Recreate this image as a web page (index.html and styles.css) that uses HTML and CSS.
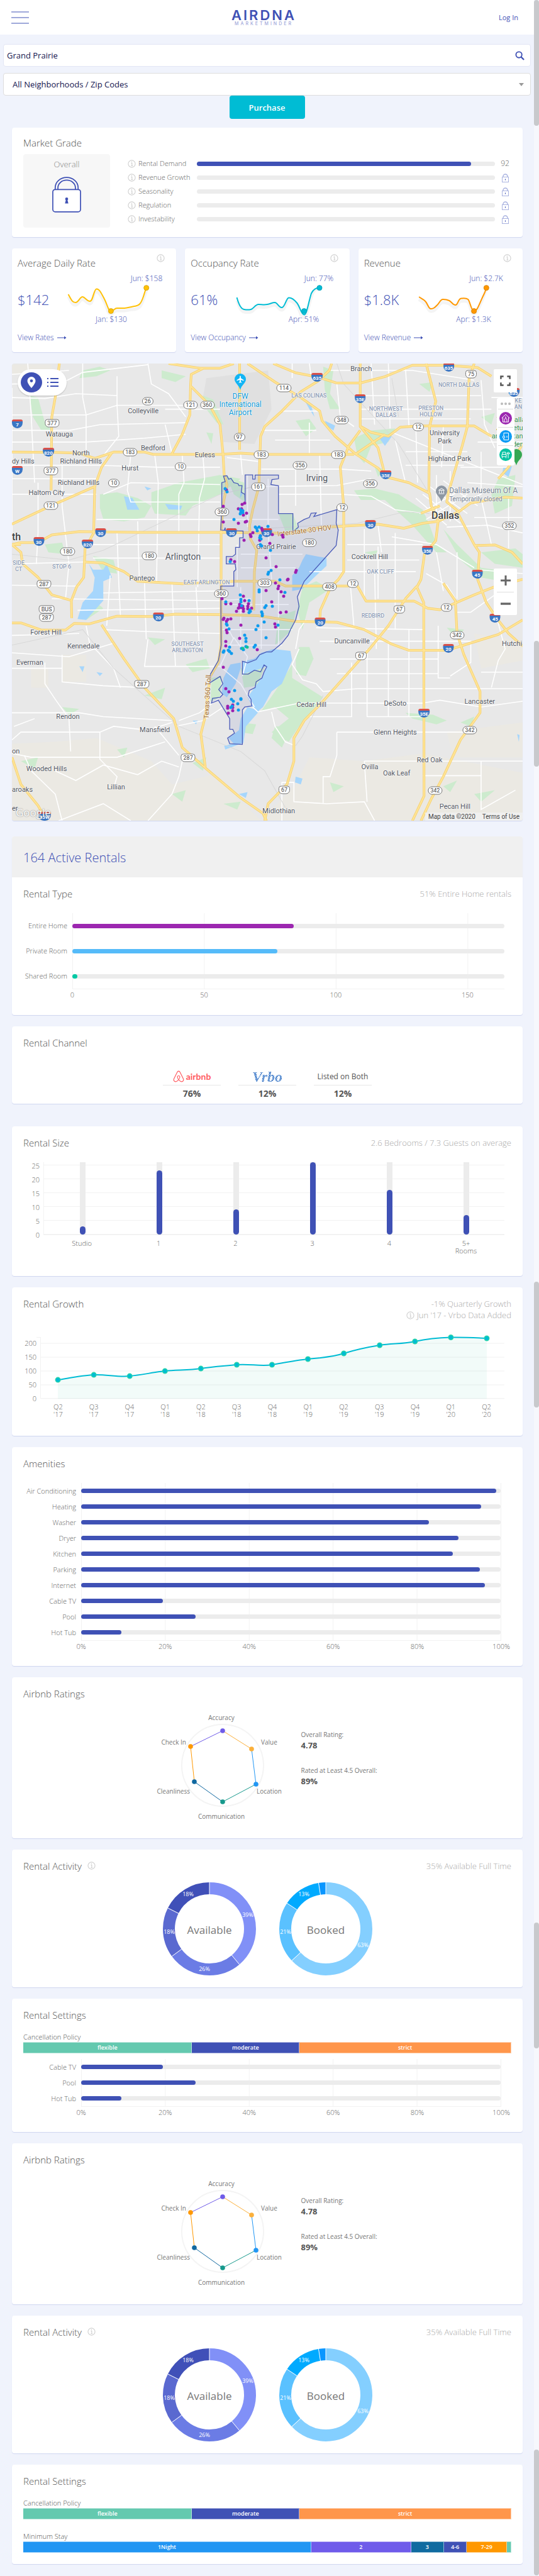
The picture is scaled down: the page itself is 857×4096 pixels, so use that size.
FILE: index.html
```html
<!DOCTYPE html>
<html lang="en">
<head>
<meta charset="utf-8">
<meta name="viewport" content="width=device-width, initial-scale=1">
<title>Grand Prairie - MarketMinder</title>
<link rel="stylesheet" href="styles.css">
</head>
<body>
<svg class="defs" aria-hidden="true">
  <symbol id="info" viewBox="0 0 14 14"><circle cx="7" cy="7" r="6" fill="none" stroke="#cfcfcf" stroke-width="1.2"/><path d="M6 6h1.400v4.200M5.800 10.300h3" fill="none" stroke="#cfcfcf" stroke-width="1.200"/><circle cx="6.900" cy="3.800" r=".9" fill="#cfcfcf"/></symbol>
  <symbol id="lock" viewBox="0 0 48 60"><path d="M5 22V19a19 17 0 0 1 38 0v3M9.500 22v-3a14.500 12.500 0 0 1 29 0v3" fill="none" stroke="currentColor" stroke-width="1.800"/><rect x="1" y="22" width="46" height="37" rx="4" fill="#fff" stroke="currentColor" stroke-width="1.800"/><circle cx="24" cy="37.500" r="2.400" fill="currentColor"/><path d="M23 38h2l1.800 7h-5.600z" fill="currentColor"/></symbol>
  <symbol id="lock-mini" viewBox="0 0 11 14"><path d="M2 6V4.500a3.500 3.500 0 0 1 7 0V6" fill="none" stroke="#aab3e0" stroke-width="1.400"/><rect x=".5" y="5.500" width="10" height="8" fill="#fff" stroke="#aab3e0"/><path d="M5.500 8.500v2" stroke="#3f51b5" stroke-width="1.200"/></symbol>
  <symbol id="arrow" viewBox="0 0 15 8"><path d="M0 4h12" stroke="#3f51b5" stroke-width="1.200"/><path d="M11 1.500l3.500 2.500-3.500 2.500z" fill="#3f51b5"/></symbol>
</svg>
<div class="shell">
<div class="page">
  <header class="topbar">
    <button class="menu" aria-label="Menu"><span></span><span></span><span></span></button>
    <a class="logo" href="#"><span class="logo-name">AIRDNA</span><span class="logo-sub">MARKETMINDER</span></a>
    <a class="login" href="#">Log In</a>
  </header>

  <form class="filters">
    <div class="search">
      <input type="text" value="Grand Prairie" aria-label="Market">
      <button type="button" class="search-btn" aria-label="Search"><svg viewBox="0 0 16 16"><circle cx="6.500" cy="6.500" r="5" fill="none" stroke="#3f51b5" stroke-width="2"/><path d="M10 10l5 5" stroke="#3f51b5" stroke-width="2.400"/></svg></button>
    </div>
    <div class="area">
      <select aria-label="Neighborhood or zip code"><option>All Neighborhoods / Zip Codes</option></select>
      <svg class="caret" viewBox="0 0 8 5"><path d="M0 0h8L4 5z" fill="#999"/></svg>
    </div>
    <button type="button" class="purchase">Purchase</button>
  </form>

  <main>
    <section class="card grade">
      <h2>Market Grade</h2>
      <div class="grade-body">
        <div class="overall"><span>Overall</span><svg class="lock-big"><use href="#lock"/></svg></div>
        <ul class="scores">
          <li><svg class="info"><use href="#info"/></svg><span class="name">Rental Demand</span><span class="track"><i style="width:92%"></i></span><span class="val">92</span></li>
          <li><svg class="info"><use href="#info"/></svg><span class="name">Revenue Growth</span><span class="track"></span><span class="val"><svg class="lock-small"><use href="#lock-mini"/></svg></span></li>
          <li><svg class="info"><use href="#info"/></svg><span class="name">Seasonality</span><span class="track"></span><span class="val"><svg class="lock-small"><use href="#lock-mini"/></svg></span></li>
          <li><svg class="info"><use href="#info"/></svg><span class="name">Regulation</span><span class="track"></span><span class="val"><svg class="lock-small"><use href="#lock-mini"/></svg></span></li>
          <li><svg class="info"><use href="#info"/></svg><span class="name">Investability</span><span class="track"></span><span class="val"><svg class="lock-small"><use href="#lock-mini"/></svg></span></li>
        </ul>
      </div>
    </section>

    <div class="rates">
      <section class="card rate">
        <header><h2>Average Daily Rate</h2><svg class="info"><use href="#info"/></svg></header>
        <div class="rate-body"><strong>$142</strong>
          <svg class="spark" viewBox="0 0 180 84">
            <path class="shade" d="M9 38C13 46 15 51 20 51S27 42 31 42s7 7 12 7 5-19 10-19 8 7 13 16 5 19 10 19 5-5 10-5 8 0 12 0 8-2 13-2 8-1 11-4 4-6 6-12 3-10 5-14"/>
            <path stroke="#ffc107" d="M8.600 34C13 42 15 47 20 47S27 38 31 38s7 7 12 7 6-19 10.400-19.500S61 32 66 41.500 72 60.600 76.400 60.600 82 56 86 56s8 0 12 0 8-1.500 13-2.500 8-1 11-4 4-6 6-12 3-10 4.700-14.400"/>
            <circle cx="76.400" cy="60.600" r="4" fill="#ffc107" stroke="#dba80e"/><circle cx="132.700" cy="23.700" r="4" fill="#ffc107" stroke="#dba80e"/>
            <text x="133" y="13">Jun: $158</text><text x="77" y="78">Jan: $130</text>
          </svg></div>
        <a href="#">View Rates <svg class="arrow"><use href="#arrow"/></svg></a>
      </section>
      <section class="card rate">
        <header><h2>Occupancy Rate</h2><svg class="info"><use href="#info"/></svg></header>
        <div class="rate-body"><strong>61%</strong>
          <svg class="spark" viewBox="0 0 180 84">
            <path class="shade" d="M1 44C4 53 7 61 12 62s7 1 11 0 7-8 12-8 9 1 14 0 8-3 12-3 6 8 11 8 7-15 11-15 8 2 13 8 6 19 11 19 7-17 12-33 8-10 13-14"/>
            <path stroke="#00bcd4" d="M.6 39C3 48 7 57 12 58s7 1 11 0 7-8 12-8 9 1 14 0 8-3 12-3 6 8 11 8 7-15 11-15.500 8 2 13 8 7 19 11.500 19S114 48 119 32.500c3-6 8-9 13-9"/>
            <circle cx="107.500" cy="60.600" r="4" fill="#00bcd4" stroke="#08a5bb"/><circle cx="132" cy="23.700" r="4" fill="#00bcd4" stroke="#08a5bb"/>
            <text x="131" y="13">Jun: 77%</text><text x="107" y="78">Apr: 51%</text>
          </svg></div>
        <a href="#">View Occupancy <svg class="arrow"><use href="#arrow"/></svg></a>
      </section>
      <section class="card rate">
        <header><h2>Revenue</h2><svg class="info"><use href="#info"/></svg></header>
        <div class="rate-body"><strong>$1.8K</strong>
          <svg class="spark" viewBox="0 0 180 84">
            <path class="shade" d="M15 42c4 3 6 4 10 8s5 11 9 11 6-1 10-6 5-8 9-8 6 0 10 2 6 6 10 6 4-10 9-10 8-1 11 1 5 19 9 19 6-4 12-18 5-11 8-22"/>
            <path stroke="#ff9800" d="M15.200 38c4 3 6 3 10 7s5 12 9 12 6-2 10-6 5-9 9-9 6 0 10 2 6 7 10 7 4-10 9-10.500 8-1 11 1.500 5 18.600 9.400 18.600 6-5 12-18.500 5-9 7.700-18.400"/>
            <circle cx="102.600" cy="60.600" r="4" fill="#ff9800" stroke="#dd8504"/><circle cx="122.300" cy="23.700" r="4" fill="#ff9800" stroke="#dd8504"/>
            <text x="122" y="13">Jun: $2.7K</text><text x="102" y="78">Apr: $1.3K</text>
          </svg></div>
        <a href="#">View Revenue <svg class="arrow"><use href="#arrow"/></svg></a>
      </section>
    </div>

    <section class="map" aria-label="Map of active rentals">
      <svg class="map-base" viewBox="34 24 1487 2364" preserveAspectRatio="none"></svg>
      <div class="map-pins"></div>
      <div class="view-toggle">
        <button class="on" aria-label="Map view"><svg viewBox="0 0 16 20"><path fill="#fff" fill-rule="evenodd" d="M8 1a6.500 6.500 0 0 0-6.500 6.500C1.500 12 8 19 8 19s6.500-7 6.500-11.500A6.500 6.500 0 0 0 8 1zm0 4.200a2.400 2.400 0 1 1 0 4.800 2.400 2.400 0 0 1 0-4.800z"/></svg></button>
        <button aria-label="List view"><svg viewBox="0 0 18 16"><path d="M5 2h13M5 8h13M5 14h13M0 2h2M0 8h2M0 14h2" stroke="#3f51b5" stroke-width="1.800"/></svg></button>
      </div>
      <div class="map-side">
        <button class="full" aria-label="Full screen"><svg viewBox="0 0 18 18"><path d="M1.500 6V1.500H6M12 1.500h4.500V6M16.500 12v4.500H12M6 16.500H1.500V12" fill="none" stroke="#555" stroke-width="2.600"/></svg></button>
        <div class="legend">
          <span class="more"><i></i><i></i><i></i></span>
          <button class="home" aria-label="Entire home"><svg viewBox="0 0 20 20"><path d="M3.500 10L10 4l6.500 6M5.500 9v7h9V9M8 16v-3.500a2 2 0 0 1 4 0V16" fill="none" stroke="#fff"/><circle cx="10" cy="8.500" r="1" fill="#fff"/></svg></button>
          <button class="private" aria-label="Private room"><svg viewBox="0 0 20 20"><path d="M7 9V4.500h7.500v11H7V13" fill="none" stroke="#fff"/><circle cx="7" cy="11" r="1.700" fill="none" stroke="#fff"/><path d="M12 9v3" stroke="#fff"/></svg></button>
          <button class="shared" aria-label="Shared room"><svg viewBox="0 0 20 20"><path d="M4 13V9.500h7V13zM5 9.500V6h5v3.500M4.500 13v2.500M10.500 13v2.500M14 8v7.500M12 8.500a2.200 3 0 0 1 4.300 0z" fill="none" stroke="#fff"/></svg></button>
        </div>
        <div class="zoom"><button aria-label="Zoom in"><svg viewBox="0 0 16 16"><path d="M8 0v16M0 8h16" stroke="#666" stroke-width="3"/></svg></button><button aria-label="Zoom out"><svg viewBox="0 0 16 16"><path d="M0 8h16" stroke="#666" stroke-width="3.400"/></svg></button></div>
      </div>
      <span class="google">Google</span>
      <p class="terms"><span>Map data ©2020</span><a href="#">Terms of Use</a></p>
    </section>

    <section class="card active">
      <h1>164 Active Rentals</h1>
      <div class="panel">
        <header><h2>Rental Type</h2><p>51% Entire Home rentals</p></header>
        <div class="hchart types">
          <ul class="names"><li>Entire Home</li><li>Private Room</li><li>Shared Room</li></ul>
          <div class="plot"><span class="track"><i class="purple" style="width:51.200%"></i></span><span class="track"><i class="sky" style="width:47.500%"></i></span><span class="track"><i class="teal" style="width:1.200%"></i></span></div>
          <div class="ticks"><span>0</span><span>50</span><span>100</span><span>150</span></div>
        </div>
      </div>
    </section>

    <section class="card channel panel">
      <header><h2>Rental Channel</h2></header>
      <dl>
        <div><dt class="airbnb"><svg viewBox="0 0 20 21"><path d="M10 1.200c-1.300 0-2 .9-2.700 2.300L1.900 14.300c-1.900 4 1.700 6.700 5 4.700 2.400-1.500 5.200-5 5.200-7.300 0-1.500-.9-2.300-2.100-2.300s-2.100.8-2.100 2.300c0 2.300 2.800 5.800 5.200 7.300 3.300 2 6.900-.7 5-4.700L12.700 3.500C12 2.100 11.300 1.200 10 1.200z" fill="none" stroke="#ff5a5f" stroke-width="1.300"/></svg>airbnb</dt><dd>76%</dd></div>
        <div><dt class="vrbo">Vrbo</dt><dd>12%</dd></div>
        <div><dt>Listed on Both</dt><dd>12%</dd></div>
      </dl>
    </section>

    <section class="card size panel">
      <header><h2>Rental Size</h2><p>2.6 Bedrooms / 7.3 Guests on average</p></header>
      <div class="vchart">
        <div class="yaxis"><span>25</span><span>20</span><span>15</span><span>10</span><span>5</span><span>0</span></div>
        <div class="columns">
          <span><i style="height:11.500%"></i></span><span><i style="height:88.500%"></i></span><span><i style="height:34.600%"></i></span><span><i style="height:100%"></i></span><span><i style="height:61.500%"></i></span><span><i style="height:26.900%"></i></span>
        </div>
        <div class="xaxis"><span>Studio</span><span>1</span><span>2</span><span>3</span><span>4</span><span>5+<br>Rooms</span></div>
      </div>
    </section>

    <section class="card growth panel">
      <header><h2>Rental Growth</h2><p>-1% Quarterly Growth<br><svg class="info"><use href="#info"/></svg> Jun '17 - Vrbo Data Added</p></header>
      <div class="vchart">
        <div class="yaxis"><span>200</span><span>150</span><span>100</span><span>50</span><span>0</span></div>
        <svg class="line" viewBox="0 0 737 98">
          <path d="M0 10h737M0 32h737M0 54h737M0 76h737M0 97.500h737M.5 0v98M-6 .5h6" stroke="#f2f2f2"/>
          <path d="M28 68C47 65 66 61 85 60S123 64 142 62 180 56 198 54 236 53 255 50 293 46 312 44 350 47 368 44 406 37 425 35 463 32 482 26 520 16 539 13 577 11 595 7 633 1 652 .5 690 1 709 2V98H28z" fill="#1abc9c" fill-opacity=".06"/>
          <path d="M28 68C47 65 66 61 85 60S123 64 142 62 180 56 198 54 236 53 255 50 293 46 312 44 350 47 368 44 406 37 425 35 463 32 482 26 520 16 539 13 577 11 595 7 633 1 652 .5 690 1 709 2" fill="none" stroke="#00bcd4" stroke-width="2"/>
          <g fill="#00bcd4" stroke="#2bd4a8" stroke-width="1.400"><circle cx="28" cy="68" r="3.800"/><circle cx="85" cy="60" r="3.800"/><circle cx="142" cy="62" r="3.800"/><circle cx="198" cy="54" r="3.800"/><circle cx="255" cy="50" r="3.800"/><circle cx="312" cy="44" r="3.800"/><circle cx="368" cy="44" r="3.800"/><circle cx="425" cy="35" r="3.800"/><circle cx="482" cy="26" r="3.800"/><circle cx="539" cy="13" r="3.800"/><circle cx="595" cy="7" r="3.800"/><circle cx="652" cy=".5" r="3.800"/><circle cx="709" cy="2" r="3.800"/></g>
        </svg>
        <div class="xaxis"><span>Q2<br>'17</span><span>Q3<br>'17</span><span>Q4<br>'17</span><span>Q1<br>'18</span><span>Q2<br>'18</span><span>Q3<br>'18</span><span>Q4<br>'18</span><span>Q1<br>'19</span><span>Q2<br>'19</span><span>Q3<br>'19</span><span>Q4<br>'19</span><span>Q1<br>'20</span><span>Q2<br>'20</span></div>
      </div>
    </section>

    <section class="card amenities panel">
      <header><h2>Amenities</h2></header>
      <div class="hchart percent">
        <ul class="names"><li>Air Conditioning</li><li>Heating</li><li>Washer</li><li>Dryer</li><li>Kitchen</li><li>Parking</li><li>Internet</li><li>Cable TV</li><li>Pool</li><li>Hot Tub</li></ul>
        <div class="plot"><span class="track"><i style="width:98.900%"></i></span><span class="track"><i style="width:95.400%"></i></span><span class="track"><i style="width:82.900%"></i></span><span class="track"><i style="width:89.900%"></i></span><span class="track"><i style="width:88.600%"></i></span><span class="track"><i style="width:95.100%"></i></span><span class="track"><i style="width:96.300%"></i></span><span class="track"><i style="width:19.500%"></i></span><span class="track"><i style="width:27.300%"></i></span><span class="track"><i style="width:9.600%"></i></span></div>
        <div class="ticks"><span>0%</span><span>20%</span><span>40%</span><span>60%</span><span>80%</span><span>100%</span></div>
      </div>
    </section>

    <section class="card ratings panel">
      <header><h2>Airbnb Ratings</h2></header>
      <div class="ratings-body">
        <svg class="radar" viewBox="0 0 223 180"><g id="radar">
          <circle cx="114" cy="88" r="65" fill="none" stroke="#f4f4f4" stroke-width="2"/>
          <g stroke-width="1"><path d="M63 58l51-25" stroke="#6f5be8"/><path d="M114 33l46 29" stroke="#fbb03b"/><path d="M160 62l7 56" stroke="#2196f3"/><path d="M167 118l-53 28" stroke="#16998c"/><path d="M114 146l-45-32" stroke="#1068a0"/><path d="M69 114l-6-56" stroke="#ff9800"/></g>
          <circle cx="114" cy="33" r="3.800" fill="#6f5be8"/><circle cx="160" cy="62" r="3.800" fill="#fbb03b"/><circle cx="167" cy="118" r="3.800" fill="#2196f3"/><circle cx="114" cy="146" r="3.800" fill="#16998c"/><circle cx="69" cy="114" r="3.800" fill="#1068a0"/><circle cx="63" cy="58" r="3.800" fill="#ff9800"/>
          <text x="112" y="16" text-anchor="middle">Accuracy</text><text x="175" y="55">Value</text><text x="168" y="133">Location</text><text x="112" y="173" text-anchor="middle">Communication</text><text x="62" y="133" text-anchor="end">Cleanliness</text><text x="56" y="55" text-anchor="end">Check In</text></g>
        </svg>
        <dl><dt>Overall Rating:</dt><dd>4.78</dd><dt>Rated at Least 4.5 Overall:</dt><dd>89%</dd></dl>
      </div>
    </section>

    <section class="card activity panel">
      <header><h2>Rental Activity <svg class="info"><use href="#info"/></svg></h2><p>35% Available Full Time</p></header>
      <div class="donuts">
        <svg viewBox="0 0 148 148"><g id="available">
          <g class="ring"><circle cx="74" cy="74" r="64.500" pathLength="100" stroke="#8190f7" stroke-dasharray="38.800 100"/><circle cx="74" cy="74" r="64.500" pathLength="100" stroke="#6b7ce5" stroke-dasharray="26.200 100" stroke-dashoffset="-38.800"/><circle cx="74" cy="74" r="64.500" pathLength="100" stroke="#5a69d0" stroke-dasharray="17.500 100" stroke-dashoffset="-65"/><circle cx="74" cy="74" r="64.500" pathLength="100" stroke="#4050b8" stroke-dasharray="17.500 100" stroke-dashoffset="-82.500"/></g>
          <path d="M74 0v19M121.500 130.500L109.500 116M14.500 117.500L29.500 106.500M8 41L25 49.500" stroke="#fff"/>
          <text x="135" y="55">39%</text><text x="66" y="141">26%</text><text x="10" y="82">18%</text><text x="40" y="22">18%</text><text class="mid" x="74" y="82">Available</text></g>
        </svg>
        <svg viewBox="0 0 148 148"><g id="booked">
          <g class="ring"><circle cx="74" cy="74" r="64.500" pathLength="100" stroke="#84cfff" stroke-dasharray="63.100 100"/><circle cx="74" cy="74" r="64.500" pathLength="100" stroke="#5ac1ff" stroke-dasharray="21.200 100" stroke-dashoffset="-63.100"/><circle cx="74" cy="74" r="64.500" pathLength="100" stroke="#00aaff" stroke-dasharray="13.200 100" stroke-dashoffset="-84.300"/><circle cx="74" cy="74" r="64.500" pathLength="100" stroke="#0a96ff" stroke-dasharray="2.500 100" stroke-dashoffset="-97.500"/></g>
          <path d="M74 0v19M20 124.500L34 111.500M12 33L28 43.500M62.500 1L65.500 20" stroke="#fff"/>
          <text x="133" y="103">63%</text><text x="10" y="82">21%</text><text x="39" y="22">13%</text><text class="mid" x="74" y="82">Booked</text></g>
        </svg>
      </div>
    </section>

    <section class="card settings panel">
      <header><h2>Rental Settings</h2></header>
      <h3>Cancellation Policy</h3>
      <div class="stack"><span class="flex" style="width:34.600%">flexible</span><span class="mod" style="width:22%">moderate</span><span class="strict" style="width:43.400%">strict</span></div>
      <div class="hchart percent">
        <ul class="names"><li>Cable TV</li><li>Pool</li><li>Hot Tub</li></ul>
        <div class="plot"><span class="track"><i style="width:19.500%"></i></span><span class="track"><i style="width:27.300%"></i></span><span class="track"><i style="width:9.600%"></i></span></div>
        <div class="ticks"><span>0%</span><span>20%</span><span>40%</span><span>60%</span><span>80%</span><span>100%</span></div>
      </div>
    </section>

    <section class="card ratings panel">
      <header><h2>Airbnb Ratings</h2></header>
      <div class="ratings-body">
        <svg class="radar" viewBox="0 0 223 180"><use href="#radar"/></svg>
        <dl><dt>Overall Rating:</dt><dd>4.78</dd><dt>Rated at Least 4.5 Overall:</dt><dd>89%</dd></dl>
      </div>
    </section>

    <section class="card activity panel">
      <header><h2>Rental Activity <svg class="info"><use href="#info"/></svg></h2><p>35% Available Full Time</p></header>
      <div class="donuts"><svg viewBox="0 0 148 148"><use href="#available"/></svg><svg viewBox="0 0 148 148"><use href="#booked"/></svg></div>
    </section>

    <section class="card settings stay panel">
      <header><h2>Rental Settings</h2></header>
      <h3>Cancellation Policy</h3>
      <div class="stack"><span class="flex" style="width:34.600%">flexible</span><span class="mod" style="width:22%">moderate</span><span class="strict" style="width:43.400%">strict</span></div>
      <h3>Minimum Stay</h3>
      <div class="stack"><span class="n1" style="width:59%">1Night</span><span class="n2" style="width:20.500%">2</span><span class="n3" style="width:6.700%">3</span><span class="mod" style="width:4.700%">4-6</span><span class="n7" style="width:8.200%">7-29</span><span class="flex" style="width:.9%"></span></div>
    </section>
  </main>
</div>
<div class="rail" aria-hidden="true"><i></i><i></i><i></i><i></i><i></i></div>
</div>
<script src="map.js"></script>
</body>
</html>
```
FILE: styles.css
```css
* { box-sizing: border-box; }
body { margin: 0; background: #f0f3fc; color: #666; font: 300 11px/16px "Open Sans", "Noto Sans", sans-serif; }
h1, h2, h3, p, ul, dl, dd { margin: 0; padding: 0; font-weight: 300; }
ul { list-style: none; }
a { color: #3f51b5; text-decoration: none; }
button { border: 0; padding: 0; background: none; font: inherit; cursor: pointer; }
.defs { position: absolute; width: 0; height: 0; }
.shell { display: flex; }
.page { flex: 1; min-width: 0; }
.rail { width: 8px; display: flex; flex-direction: column; background: #f6f7fc; }
.rail i { height: 200px; margin-bottom: 819px; border-radius: 4px; background: #c8c9cc; }
.rail i:nth-child(n+4) { margin-bottom: 0; }
.rail i:last-child { margin-top: auto; }

.topbar { display: flex; justify-content: space-between; align-items: center; height: 55px; padding: 0 25px 0 18px; background: #fff; }
.menu { display: flex; flex-direction: column; gap: 7px; width: 28px; }
.menu span { height: 2px; background: #9fa8da; }
.logo { display: flex; flex-direction: column; align-items: center; }
.logo-name { font: 600 22px/20px Inter, sans-serif; letter-spacing: 3px; }
.logo-sub { font: 500 7px/8px Inter, sans-serif; letter-spacing: 3px; color: #9fa8da; }
.login { font-size: 11px; font-weight: 400; }

.filters { display: flex; flex-direction: column; padding: 15px 5px 0; }
.search, .area { display: flex; align-items: center; height: 36px; background: #fff; border: 1px solid #e3e6f5; border-radius: 4px; }
.search { margin-bottom: 10px; padding: 0 9px 0 5px; }
.search input { flex: 1; min-width: 0; border: 0; padding: 0; outline: 0; background: none; font: 400 13px/20px "Open Sans", sans-serif; color: #14144f; }
.search-btn svg { display: block; width: 15px; height: 15px; }
.area { border-color: #ddd; padding-right: 10px; }
.area select { flex: 1; appearance: none; border: 0; padding: 0 0 0 14px; background: none; font: 400 13px/20px "Open Sans", sans-serif; color: #14144f; }
.caret { width: 8px; height: 5px; }
.purchase { align-self: center; width: 120px; height: 37px; border-radius: 4px; background: #00bcd4; color: #fff; font-size: 13px; font-weight: 600; }

main { display: flex; flex-direction: column; gap: 18px; padding: 14px 18px 18px 19px; }
.card { background: #fff; border-radius: 4px; box-shadow: 0 1px 1px #cfd6f0; overflow: hidden; }
h2 { font-size: 15px; line-height: 20px; color: #555; }
.info { width: 13px; height: 13px; flex: none; }

.grade { padding: 14px 18px 15px; }
.grade-body { display: flex; gap: 28px; margin-top: 8px; }
.overall { display: flex; flex-direction: column; align-items: center; width: 138px; height: 117px; padding-top: 7px; gap: 10px; background: #f7f7f7; border-radius: 4px; color: #888; font-size: 13px; line-height: 18px; }
.lock-big { width: 46px; height: 58px; color: #3f51b5; }
.scores { flex: 1; padding-top: 4px; }
.scores li { display: flex; align-items: center; height: 22px; font-size: 11px; }
.scores .name { width: 97px; padding-left: 4px; white-space: nowrap; }
.scores .track { flex: 1; }
.scores .val { width: 26px; padding-left: 6px; font-size: 12px; text-align: center; }
.lock-small { display: inline-block; width: 11px; height: 14px; vertical-align: middle; }
.track { display: block; height: 7px; border-radius: 4px; background: #ececec; }
.track i { display: block; height: 7px; min-width: 7px; border-radius: 4px; background: #3f51b5; }
.track .purple { background: #9c27b0; }
.track .sky { background: #55bbf9; }
.track .teal { background: #00c9a4; }

.rates { display: grid; grid-template-columns: repeat(3, 1fr); gap: 14px; }
.rate { display: flex; flex-direction: column; height: 165px; padding: 9px 0 0 9px; }
.rate header { display: flex; justify-content: space-between; padding-right: 18px; }
.rate h2 { padding-top: 4px; }
.rate-body { display: flex; justify-content: space-between; align-items: center; margin-top: 6px; }
.rate-body strong { width: 72px; flex: none; font-size: 22px; line-height: 28px; font-weight: 300; color: #3f51b5; }
.spark { width: 180px; height: 84px; flex: none; overflow: visible; }
.spark path { fill: none; stroke-width: 2; }
.spark .shade { stroke: #f4f4f4; stroke-width: 5; }
.spark text { font-size: 12px; text-anchor: middle; fill: #3f51b5; }
.rate > a { margin-top: 11px; font-size: 12px; }
.arrow { width: 15px; height: 8px; margin-left: 2px; }

.map { position: relative; border-radius: 4px; overflow: hidden; box-shadow: 0 1px 1px #cfd6f0; margin-bottom: 7px; background: #e8e8e8; font-family: Roboto, sans-serif; font-weight: 400; }
.map-base { display: block; width: 100%; height: 727px; }
.map-base path { vector-effect: non-scaling-stroke; }
.map-pins { position: absolute; inset: 0; overflow: hidden; }
.map-pins > * { position: absolute; transform: translate(-50%, -50%); }
.place { text-align: center; white-space: pre; font-size: 11px; line-height: 13px; color: #505560; text-shadow: 0 0 2px #fff, 0 0 2px #fff, 0 0 1px #fff; }
.place.big { font-size: 14px; line-height: 16px; }
.place.metro { font-size: 16px; line-height: 18px; font-weight: 500; color: #3c4043; }
.map-pins .edge { transform: translate(0, -50%); }
.place.area-name { font-size: 9px; line-height: 10px; font-weight: 500; color: #8c9bb5; }
.place.poi { color: #0f9bd8; font-size: 12px; }
.place.park { color: #2e8b45; }
.place.museum { color: #74808f; text-align: left; font-size: 12px; }
.place.museum small { font-size: 10px; }
.place.road { color: #a06a2c; font-size: 11px; }
.map-pins .tilt { transform: translate(-50%, -50%) rotate(-7deg); }
.map-pins .up { transform: translate(-50%, -50%) rotate(-87deg); }
.route { min-width: 15px; padding: 0 3px; border: 1px solid #777; border-radius: 7px; background: #fff; font-size: 9px; line-height: 11px; color: #444; text-align: center; }
.route.us { border-radius: 4px 4px 6px 6px; }
.route.inter { border: 0; padding: 3px 2px 0; min-width: 17px; border-radius: 3px 3px 9px 9px; background: linear-gradient(#d8504a 3px, #3a76c4 3px); color: #fff; font-size: 8px; font-weight: 700; }
.dot { width: 5px; height: 5px; border-radius: 3px; background: #9c1fb0; }
.dot.b { background: #0f9bee; }
.dot.g { background: #12c29a; }
.marker { display: block; width: 18px; height: 26px; }
.view-toggle { position: absolute; left: 9px; top: 9px; display: flex; width: 78px; padding: 5px; background: #fff; border-radius: 21px; box-shadow: 0 1px 2px #0003; }
.view-toggle button { display: grid; place-items: center; width: 34px; height: 32px; border-radius: 50%; }
.view-toggle .on { background: #3f51b5; }
.view-toggle svg { width: 18px; height: 16px; }
.view-toggle .on svg { width: 16px; height: 20px; }
.map-side { position: absolute; right: 9px; top: 9px; bottom: 20px; display: flex; flex-direction: column; align-items: center; }
.full { display: grid; place-items: center; width: 37px; height: 37px; background: #fff; border-radius: 2px; }
.full svg { width: 17px; height: 17px; }
.legend { display: flex; flex-direction: column; align-items: center; width: 28px; height: 107px; margin-top: 9px; background: #fff; border-radius: 3px; }
.more { display: flex; gap: 2px; padding: 7px 0 6px; }
.more i { width: 4px; height: 4px; border-radius: 2px; background: #bbb; }
.legend button { width: 24px; height: 29px; border-top: 1px solid #ddd; display: grid; place-items: center; }
.legend svg { width: 20px; height: 20px; border-radius: 50%; background: #9c27b0; }
.legend .private svg { background: #0d9bf5; }
.legend .shared svg { background: #06c3a2; }
.zoom { display: flex; flex-direction: column; width: 37px; margin-top: 164px; padding: 0 5px; background: #fff; border-radius: 2px; }
.zoom button { display: grid; place-items: center; height: 37px; }
.zoom button + button { border-top: 1px solid #ddd; }
.zoom svg { width: 16px; height: 16px; }
.google { position: absolute; left: 6px; bottom: 3px; color: #fff; font: 500 17px/20px "Open Sans", sans-serif; text-shadow: 0 0 2px #666; }
.terms { position: absolute; right: 0; bottom: 0; display: flex; gap: 11px; padding: 0 5px; background: #f1f1f1cc; font-size: 10px; line-height: 13px; color: #444; font-weight: 400; }
.terms a { color: #444; }

h1 { padding: 20px 18px 17px; background: #f0f0f0; color: #3f51b5; font-size: 20px; line-height: 28px; }
.panel { padding: 16px 18px 0; }
.panel > header { display: flex; justify-content: space-between; }
.panel > header p { color: #aaa; font-size: 13px; line-height: 18px; text-align: right; padding-top: 1px; }
.panel > header .info { vertical-align: -2px; }
.panel h2 .info { margin-left: 5px; vertical-align: 0; }
.active .panel { height: 219px; }
.hchart { display: grid; grid-template-columns: 92px 1fr; padding-right: 16px; font-size: 11px; }
.hchart.types { grid-template-columns: 78px 1fr; padding-right: 11px; margin-top: 21px; --row: 40px; --step: 30.488%; }
.percent { --row: 25px; --step: 20%; }
.names li { height: var(--row); line-height: var(--row); padding-right: 8px; text-align: right; white-space: nowrap; }
.plot { display: grid; grid-auto-rows: var(--row); align-items: center; border-bottom: 1px solid #f2f2f2; border-right: 1px solid #f2f2f2; background: linear-gradient(to right, #f2f2f2 1px, transparent 1px) 0 0 / var(--step) 100%; }
.types .plot { border-right: 0; }
.ticks { grid-column: 2; display: flex; justify-content: space-between; margin-top: 1px; }
.types .ticks { width: 91.46%; }
.ticks span { width: 0; display: flex; justify-content: center; }

.channel { height: 123px; }
.channel dl { display: flex; justify-content: center; gap: 28px; margin-top: 32px; }
.channel dl > div { width: 92px; text-align: center; }
.channel dt { display: flex; justify-content: center; align-items: center; height: 26px; padding-bottom: 2px; border-bottom: 1px solid #e8e8e8; font-size: 12px; font-weight: 400; color: #555; white-space: nowrap; }
.channel dd { padding-top: 3px; font-size: 14px; line-height: 20px; font-weight: 700; color: #555; }
.channel .airbnb { gap: 3px; color: #ff5a5f; font: 700 14px/18px Lato, sans-serif; }
.airbnb svg { width: 18px; height: 19px; }
.channel .vrbo { font: italic 700 24px/22px "Liberation Serif", serif; color: transparent; background: repeating-linear-gradient(60deg, #3469b8 0 1px, #9cc6f2 1px 2px); background-clip: text; -webkit-background-clip: text; }

.size { height: 238px; margin-top: 18px; }
.vchart { display: grid; grid-template-columns: 32px 1fr; padding-right: 11px; line-height: 12px; }
.size .vchart { margin-top: 21px; }
.yaxis { display: flex; flex-direction: column; justify-content: space-between; padding-right: 6px; text-align: right; font-size: 11px; margin-bottom: -6px; }
.columns { display: flex; height: 116px; border-left: 1px solid #f2f2f2; border-bottom: 1px solid #f2f2f2; background: linear-gradient(to top, #f2f2f2 1px, transparent 1px) 0 100% / 100% 22px; }
.columns span { flex: 1; display: flex; align-items: flex-end; background: linear-gradient(#ececec, #ececec) center / 9px 100% no-repeat; }
.columns i { width: 9px; margin: 0 auto; border-radius: 5px; background: #3f51b5; }
.xaxis { grid-column: 2; display: flex; margin-top: 7px; text-align: center; }
.xaxis span { flex: 1; }
.growth { height: 236px; }
.growth .vchart { grid-template-columns: 27px 1fr; margin-top: 26px; }
.growth .yaxis { padding-top: 4px; }
.line { display: block; width: 100%; overflow: visible; }

.amenities { height: 348px; }
.amenities .hchart { margin-top: 21px; }
.ratings { height: 256px; }
.ratings-body { display: flex; justify-content: center; gap: 16px; margin-top: 16px; }
.radar { width: 223px; height: 180px; }
.radar text { font-size: 10px; font-weight: 400; fill: #777; }
.ratings dl { width: 132px; padding-top: 31px; white-space: nowrap; }
.ratings dt { font-size: 10px; font-weight: 400; color: #777; }
.ratings dd { margin-bottom: 23px; font-size: 13px; line-height: 18px; font-weight: 700; color: #555; }
.activity { height: 219px; }
.donuts { display: flex; justify-content: center; gap: 37px; margin-top: 16px; }
.donuts svg { width: 148px; height: 148px; }
.ring { fill: none; stroke-width: 19; }
.ring circle { transform: rotate(-90deg); transform-origin: 74px 74px; }
.donuts text { font-size: 9px; font-weight: 400; fill: #fff; text-anchor: middle; }
.donuts .mid { font-size: 17px; font-weight: 400; fill: #777; }
.settings { height: 212px; }
h3 { margin-top: 17px; font-size: 11px; line-height: 16px; color: #555; }
.stack { display: flex; height: 18px; }
.stack span { border: 1px solid #fff8; border-width: 1px 1px 1px 0; color: #fff; font-size: 9px; font-weight: 600; line-height: 16px; text-align: center; overflow: hidden; }
.stack .flex { background: #64c9af; }
.stack .mod { background: #3f51b5; }
.stack .strict { background: #ff964b; }
.stack .n1 { background: #2196f3; }
.stack .n2 { background: #6f5bea; }
.stack .n3 { background: #106ba0; }
.stack .n7 { background: #ff9800; }
.settings .hchart { margin-top: 9px; }
.stay { height: 158px; }
.stay .stack + h3 { margin-top: 19px; }
```
FILE: map.js
```javascript
// Map units: x runs 34..1521, y runs 24..2388 over the visible area.
const base = document.querySelector('.map-base');
const pins = document.querySelector('.map-pins');
const line = pts => 'M' + pts.split(' ').join('L');

function draw(d, attrs) {
  const p = document.createElementNS('http://www.w3.org/2000/svg', 'path');
  p.setAttribute('d', d);
  for (const k in attrs) p.setAttribute(k, attrs[k]);
  base.appendChild(p);
}
function pin(x, y, cls, html) {
  const el = document.createElement('span');
  el.className = cls;
  el.innerHTML = html || '';
  el.style.left = ((x - 34) / 14.87).toFixed(2) + '%';
  el.style.top = ((y - 24) / 23.64).toFixed(2) + '%';
  pins.appendChild(el);
}

const fields = ['34,1990 160,1980 280,1960 440,2080 500,2200 620,2150 760,2388 34,2388', '900,2060 1060,2080 1230,2040 1521,2140 1521,2388 760,2388 860,2200', '90,1600 140,1600 140,1700 90,1700', '180,1530 250,1530 250,1670 180,1670', '1380,1420 1521,1460 1521,1560 1400,1600', '1300,1930 1521,1880 1521,2060 1320,2060', '34,30 150,30 150,70 34,80'];
const airport = ['600,100 780,60 790,260 740,440 650,430 640,300 590,200'];
const parks = ['85,190 110,200 130,330 150,370 120,370 95,300', '440,690 520,640 640,600 700,620 640,700 560,760 540,810 450,800 440,760', '290,700 340,690 400,720 440,760 420,820 360,840 300,830 290,770', '1030,680 1090,670 1160,700 1230,780 1250,860 1270,960 1300,1000 1270,1000 1200,860 1120,730 1050,730', '1290,880 1330,960 1400,1080 1440,1090 1460,1150 1400,1130 1340,1040', '1400,1000 1500,980 1521,1010 1521,1080 1440,1060', '940,40 970,60 960,180 990,260 960,260 945,160', '860,320 900,310 920,360 890,400', '1030,410 1080,370 1150,360 1130,430 1080,450 1060,540 1040,500', '810,800 852,800 870,890 830,890', '860,1560 870,1490 900,1490 912,1550 890,1640 862,1630', '850,1650 940,1750 870,1900 840,1980 790,1930 840,1860 800,1800 760,1820 800,1720 850,1580', '880,1180 920,1150 960,1190 900,1260 880,1400 865,1300', '270,1020 330,1040 340,1110 300,1100', '240,60 290,40 320,60 280,90 230,100', '590,190 620,210 650,340 630,330 600,260', '660,610 710,640 712,740 680,700', '615,1650 645,1640 640,1750 612,1770', '700,1600 770,1590 750,1690 710,1700', '130,960 180,950 190,1010 140,1000', '470,60 540,90 510,120 470,100', '810,1330 860,1300 850,1400 800,1480', '1400,300 1440,280 1430,340', '1450,620 1500,600 1490,760 1440,800 1430,700', '540,1580 600,1550 610,1600 560,1620', '420,1740 480,1700 470,1760', '1340,1880 1380,1850 1370,1900', '800,1900 850,1900 820,2010 790,1960', '260,1230 300,1290 250,1350', '60,2080 110,2060 100,2120', '340,2020 370,2010 360,2060', '500,2250 540,2230 530,2290', '560,2090 600,2060 590,2130', '1290,2210 1330,2180 1310,2240', '1380,2250 1440,2230 1400,2290', '650,2300 700,2290 690,2330', '960,2190 1000,2210 970,2240', '180,1800 230,1810 200,1840', '430,1440 480,1450 450,1480', '700,1880 745,1890 735,1940 700,1930', '1180,1830 1260,1840 1300,1870 1270,1890 1200,1860', '1060,1000 1100,990 1090,1020', '1090,560 1120,570 1100,610', '1220,130 1260,120 1250,170', '1300,1390 1350,1400 1330,1450', '600,380 620,385 615,440'];
const waters = ['795,1500 845,1510 850,1560 820,1680 790,1720 765,1800 750,1822 735,1800 720,1750 740,1700 765,1640 775,1590 760,1600 745,1610 705,1630 705,1565 740,1550 760,1520', '670,1580 700,1570 700,1600 685,1680 660,1750 645,1730 650,1650', '720,1800 755,1820 740,1850 715,1900 708,1985 655,2020 652,2000 680,1990 665,1960 695,1920 700,1860', '890,1010 950,1030 950,1070 920,1120 880,1190 850,1200 850,1120 870,1080 880,1040', '258,1060 270,1090 300,1090 310,1060 325,1130 300,1150 300,1250 250,1350 225,1345 240,1260 270,1200 275,1130', '360,710 385,720 405,780 370,780', '480,750 530,760 525,780 490,778', '945,320 975,345 970,370 950,345', '1465,560 1490,555 1480,610 1462,590', '1100,400 1140,400 1120,450', '885,210 905,240 915,300 900,260', '695,2250 720,2240 715,2270', '860,2160 880,2170 875,2200 858,2190', '1505,1940 1512,1945 1510,1980', '230,1590 245,1590 240,1620', '280,1620 298,1625 290,1640', '700,680 705,700 698,720', '420,660 440,670 428,680', '560,1870 575,1870 570,1890'];
fields.forEach(p => draw(line(p) + 'z', { fill: '#ebe9e3' }));
airport.forEach(p => draw(line(p) + 'z', { fill: '#e0e0e0' }));
parks.forEach(p => draw(line(p) + 'z', { fill: '#cdebce' }));
waters.forEach(p => draw(line(p) + 'z', { fill: '#a6d6fc' }));

const streets = [
  '34,130 180,125 240,70 430,30', '34,290 250,290 340,240 540,240', '240,24 240,200 250,290 250,470', '340,90 340,240 345,400 300,500', '34,200 130,205 220,180 340,190', '34,370 200,370 290,340 540,330', '34,430 130,430 250,430 420,410 540,390',
  '430,24 440,130 490,180 540,300', '80,24 90,290 95,470 100,640', '34,550 280,550 460,560 640,560', '34,620 280,620', '380,490 370,680 380,740 460,740 640,740', '450,500 460,640 455,1160', '530,500 535,640 520,700 520,900', '590,500 595,620 580,720 575,1180',
  '300,700 380,640 640,650', '280,830 640,830', '110,640 110,900 105,1060', '180,550 180,760 200,1060 190,1240', '34,700 280,700', '34,1060 250,1050', '270,960 640,960', '270,1030 640,1030', '340,900 345,1160 350,1330', '400,840 405,1150', '300,1210 640,1200', '34,1170 230,1175',
  '150,1240 640,1250 730,1240', '320,1120 310,1380', '420,1160 425,1450', '500,1160 510,1590', '570,1180 580,1500', '225,1300 640,1290', '300,1400 430,1410 640,1420', '250,1380 260,1470 330,1600 350,1700', '430,1450 420,1590 640,1590', '34,1430 230,1420', '34,1520 200,1540 330,1470',
  '34,1600 180,1600', '130,1570 130,1680 160,1760 200,1860 205,2030', '34,1830 230,1830 300,1850 500,1870', '180,1530 180,1670 300,1690 420,1700', '34,1970 60,1930 290,1930 330,1900 430,1920 500,1880', '34,2040 90,2060 170,2060 340,2060 480,1980', '290,1930 290,2070 340,2160 330,2220',
  '160,2130 220,2180 300,2100 400,2150 470,2080 520,2110', '100,1860 40,1900', '70,2050 90,2130 160,2250 180,2388', '170,2388 300,2300 380,2388', '430,2388 500,2250 520,2160 530,2080', '510,1900 590,1870 650,1800', '450,1900 520,2050', '640,1750 580,1830 520,1870',
  '735,1800 750,1825 790,1810 870,1780 1040,1780 1230,1780', '790,1825 800,1900 830,1980 852,1995', '680,1440 640,1590 700,1680 740,1800', '680,1440 720,1540 705,1640', '650,1350 680,1450', '643,1400 850,1400', '650,1270 840,1270', '700,1180 700,1500', '760,1180 760,1500', '810,1180 810,1480', '650,1480 820,1480', '690,960 690,1180', '700,1080 860,1080', '700,1010 880,1010',
  '870,1500 850,1580 880,1660 920,1680 940,1720 1040,1705 1390,1705', '1521,1705 1390,1705', '920,1390 1230,1400', '930,1460 1275,1460', '960,1552 1275,1552', '980,1628 1275,1628', '900,1850 1023,1850 1023,1570', '1068,1500 1068,1850 1230,1850', '1130,1470 1130,1850', '1190,1400 1190,1850', '1275,1380 1275,1650 1310,1650', '1040,1780 1230,1780 1280,1765 1400,1800 1521,1770', '980,1930 1360,1930', '980,1930 980,2050 960,2160 940,2160 940,2300', '1060,2080 1521,2080', '1060,2080 1068,2290', '1230,2155 1400,2155 1400,2080', '1400,2155 1400,2330 1500,2230', '820,2388 820,2190 855,2190 855,2290 950,2300 1060,2290 1090,2388',
  '1270,1460 1370,1460 1370,1570 1310,1640', '1400,1620 1521,1620', '1330,1310 1370,1310 1440,1220', '1440,1300 1470,1500 1450,1560 1430,1700', '1240,1110 1300,1170 1325,1240', '890,1350 870,1400 860,1500', '1020,1180 1030,1390', '1090,1100 1095,1500', '1150,900 1150,1400', '900,1100 1210,1100', '1010,960 1230,960', '1010,1040 1220,1040', '1060,880 1060,1240', '1100,860 1110,1000',
  '810,700 990,700 1080,710 1150,780 1240,800', '860,560 860,760', '930,500 935,860', '760,570 990,570 1080,580', '760,660 980,655 1080,620', '900,330 900,490', '800,420 960,420', '760,370 920,370', '820,270 930,270', '850,24 850,100', '900,24 905,90', '980,130 990,300 1030,350', '1080,24 1090,340', '1130,24 1135,360', '1180,50 1190,350', '1050,190 1400,190', '1050,260 1430,260', '1050,310 1370,310', '960,60 1200,60 1380,110', '1140,380 1521,650', '1150,420 1180,640', '1180,480 1360,480', '1180,550 1350,550', '1210,350 1215,640', '1290,350 1285,560', '1400,110 1410,340 1440,460', '1430,200 1521,200', '1390,430 1521,430', '1400,480 1400,700 1350,740', '1340,560 1480,560', '1360,640 1521,660',
  '1230,700 1340,850', '1250,660 1360,800', '1210,720 1300,860', '1290,630 1390,760', '1220,800 1330,690', '1240,830 1360,700', '1270,600 1270,850', '1310,580 1310,840', '1300,870 1420,860 1521,900', '1400,720 1430,960', '1480,720 1480,980', '1380,820 1521,820', '1140,920 1270,960 1380,1080', '1270,1000 1290,1200', '1330,1000 1330,1240', '1390,1090 1521,1110', '34,150 34,900', '480,260 640,260', '480,340 500,490', '660,510 750,530', '700,494 705,600', '34,80 200,60', '1100,970 1100,1240', '720,600 720,870', '780,620 780,860', '650,830 810,830', '780,900 790,1140'
];
const rails = ['34,1010 200,1040 300,990 640,700 740,660', '34,1480 240,1400 330,1600 520,1900 700,2030 770,2130 830,2320', '980,24 1000,130 1160,440 1250,700', '740,880 1040,850 1180,790 1250,800', '940,1740 880,1950 860,2000', '1140,100 1160,300'];
const highways = [
  '34,482 160,483 230,487 275,515 300,500 330,482 420,482 445,494 640,494 700,487 760,494 1030,494', '34,855 147,760 275,660 295,560 325,485', '275,660 272,900 247,980 245,1050 243,1130 222,1180 207,1250 208,1340', '490,24 580,48 640,48 680,24', '590,50 556,80 554,140 610,240 640,340 648,480 652,600 660,650 648,760 643,900 643,1480 635,1570 612,1640 605,1720 598,1840 584,1940 597,2110', '554,140 552,290 530,390 500,490', '697,24 697,470', '965,24 958,60 925,115 875,170 820,270 770,350 758,400 753,660 735,780 726,860 728,930 747,990 740,1100 738,1300',
  '795,24 860,72 920,92 980,125 1048,125 1120,92 1200,33 1300,33 1390,45 1430,90', '720,24 800,120 875,200 930,270 937,320 975,400 1035,492 1100,565 1122,610 1190,640 1250,695 1255,760 1275,840', '1048,24 1048,350 1100,460 1120,600', '1048,370 1015,450 990,560 1000,760 1000,1100 985,1140 962,1180 932,1300 930,1360', '1050,350 1080,380 1130,400 1165,353 1217,347 1380,347 1430,400', '1120,390 1035,492', '1380,24 1365,100 1360,350 1345,450 1305,690 1300,740 1335,790', '1240,24 1268,220 1250,350 1248,690',
  '34,960 60,950 110,950 150,910 230,893 400,897 640,897 850,902 930,872 1100,855 1175,876 1230,850 1275,840 1335,790 1370,745 1470,715 1521,720', '1225,798 1280,760', '1275,840 1268,940 1235,1010 1225,1140 1213,1180 1233,1260 1234,2260 1200,2388', '1330,790 1380,960 1395,1000 1390,1140 1415,1260 1445,1340 1480,1420 1521,1485', '1380,965 1440,962 1490,1000 1521,1060', '34,960 60,1000 65,1060 110,1130 150,1220 205,1248', '34,960 60,960', '245,1050 300,1055 360,1100 400,1150 530,1163 680,1150 800,1150 830,1174 1040,1174 1065,1252 1205,1252 1245,1290 1280,1297 1380,1220 1440,1178 1521,1140',
  '34,1365 60,1365 120,1402 190,1402 215,1368 260,1370 340,1330 440,1332 510,1320 640,1322 750,1328 860,1357 980,1362 1060,1400 1140,1475 1190,1507 1300,1507 1450,1425 1521,1350', '295,1375 360,1550 420,1700 505,1860 530,2010 600,2120 700,2270 765,2350 775,2388', '1213,1175 1180,1240 1130,1380 1075,1500 1000,1650 940,1770 885,1870 855,1960 855,2080 835,2200 780,2300 770,2388', '1290,1160 1325,1250 1330,1420 1350,1530 1397,1720 1397,1830 1340,1970 1290,2160 1255,2275 1225,2388', '34,2060 60,2200 110,2310 135,2388', '172,24 160,200 150,300 148,680', '1521,440 1480,560 1450,620'
];
streets.forEach(p => draw(line(p), { fill: 'none', stroke: '#fff', 'stroke-width': 1.6 }));
rails.forEach(p => draw(line(p), { fill: 'none', stroke: '#d8d8d8', 'stroke-width': 1 }));
const round = { fill: 'none', 'stroke-linejoin': 'round' };
highways.forEach(p => draw(line(p), { ...round, stroke: '#f7cf6b', 'stroke-width': 4 }));
highways.forEach(p => draw(line(p), { ...round, stroke: '#fee496', 'stroke-width': 2.4 }));

draw(line('650,606 660,604 665,622 672,618 680,640 692,645 695,655 704,655 702,690 712,700 713,740 713,600 735,600 735,622 742,622 742,601 810,601 810,620 791,624 788,650 810,656 810,800 852,800 852,893 868,870 866,850 885,830 900,820 905,798 920,796 913,815 980,780 978,850 984,885 978,965 940,1040 900,1120 885,1150 865,1230 870,1280 860,1350 845,1400 838,1430 820,1470 800,1500 790,1515 775,1515 755,1530 745,1555 720,1572 705,1563 705,1630 722,1630 740,1610 758,1618 768,1582 776,1592 768,1620 762,1650 745,1670 742,1700 725,1715 722,1740 730,1760 732,1795 712,1800 705,1815 705,1993 668,1990 662,1960 682,1935 677,1915 668,1915 668,1860 635,1765 615,1780 618,1755 640,1750 648,1735 636,1710 648,1680 640,1642 610,1675 612,1630 635,1560 643,1480 642,1175 680,1175 680,1100 686,1090 684,1060 658,1060 658,1022 676,1022 685,1010 685,975 697,975 697,925 707,925 707,890 655,887 655,873 652,887 642,885 645,760 645,640 655,635') + 'z', { fill: '#3f51b5', 'fill-opacity': 0.1, stroke: '#4a5bb8', 'stroke-width': 1.3 });

const routes = [[26, 429, 219], [121, 554, 240], [360, 603, 240], [114, 826, 150], [348, 994, 318], [97, 696, 405], [183, 378, 481], [183, 760, 496], [183, 985, 496], [10, 525, 558], [356, 873, 552], [356, 1077, 645], [10, 331, 642], [161, 751, 660], [121, 147, 760], [12, 996, 768], [360, 646, 792], [352, 1482, 864], [180, 900, 951], [180, 196, 996], [180, 434, 1020], [303, 770, 1158], [12, 1027, 1161], [408, 959, 1179], [360, 643, 1215], [12, 1299, 1287], [342, 1330, 1428], [342, 1367, 1920], [342, 1266, 2232], [12, 1217, 354]];
const usRoutes = [[377, 151, 334], [377, 147, 580], [75, 1371, 78], [287, 127, 1165], [287, 135, 1337], [67, 1162, 1295], [67, 1051, 1535], [287, 412, 1682], [287, 547, 2063], [67, 827, 2230]];
const interstates = [['635', 923, 96], ['635', 1306, 42], ['635', 1495, 172], ['35E', 1048, 207], ['820', 140, 483], ['35E', 1122, 600], ['30', 1078, 855], ['30', 292, 898], ['30', 674, 898], ['30', 775, 898], ['30', 112, 945], ['820', 254, 958], ['35E', 1244, 990], ['45', 1389, 1114], ['20', 460, 1334], ['20', 932, 1360], ['45', 1441, 1340], ['20', 1305, 1496], ['35E', 1234, 1832], ['35W', 129, 2366]];
routes.forEach(r => pin(r[1], r[2], 'route', r[0]));
usRoutes.forEach(r => pin(r[1], r[2], 'route us', r[0]));
pin(135, 1294, 'route us', 'BUS');
interstates.forEach(r => pin(r[1], r[2], 'route inter', r[0]));
pin(34, 578, 'route inter edge', 'W');
pin(34, 336, 'route inter edge', '7');

const places = [
  ['Branch', 1051, 50], ['Colleyville', 416, 268], ['Watauga', 172, 388], ['Bedford', 445, 460], ['Euless', 596, 496], ['North\nRichland Hills', 235, 510], ['dy Hills', 34, 529, 'edge'], ['Hurst', 378, 565], ['Richland Hills', 228, 640], ['Haltom City', 135, 691], ['University\nPark', 1294, 404], ['Highland Park', 1308, 514], ['Pantego', 413, 1133], ['Cockrell Hill', 1076, 1021], ['Forest Hill', 133, 1414], ['Kennedale', 242, 1484], ['Everman', 86, 1568], ['Duncanville', 1024, 1459], ['Hutchi', 1490, 1471], ['Rendon', 197, 1847], ['Mansfield', 450, 1918], ['Cedar Hill', 906, 1786], ['DeSoto', 1150, 1780], ['Lancaster', 1396, 1769], ['Glenn Heights', 1150, 1930], ['Red Oak', 1250, 2074], ['Ovilla', 1076, 2107], ['Oak Leaf', 1154, 2140], ['Wooded Hills', 135, 2119], ['Lillian', 337, 2212], ['aroaks', 34, 2227, 'edge'], ['on', 34, 2026, 'edge'], ['er', 34, 2324, 'edge'], ['Midlothian', 811, 2335], ['Pecan Hill', 1324, 2313],
  ['Irving', 922, 617, 'big'], ['Arlington', 532, 1021, 'big'], ['Grand Prairie', 803, 970], ['Dallas', 1296, 811, 'metro'], ['th', 34, 921, 'metro edge'],
  ['NORTH DALLAS', 1335, 135, 'area-name'], ['LAS COLINAS', 899, 189, 'area-name'], ['NORTHWEST\nDALLAS', 1123, 274, 'area-name'], ['PRESTON\nHOLLOW', 1254, 271, 'area-name'], ['KE\nAN', 1508, 232, 'area-name'], ['STOP 6', 179, 1074, 'area-name'], ['SIDE\nCT', 36, 1070, 'area-name edge'], ['OAK CLIFF', 1107, 1101, 'area-name'], ['EAST ARLINGTON', 601, 1155, 'area-name'], ['SOUTHEAST\nARLINGTON', 545, 1492, 'area-name'], ['REDBIRD', 1085, 1329, 'area-name'],
  ['DFW\nInternational\nAirport', 699, 235, 'poi'], ['The Dallas\nArboretum\nand Botanical\nGarden', 1492, 377, 'park'],
  ['Dallas Museum Of A\n<small>Temporarily closed</small>', 1307, 702, 'museum edge'], ['Interstate 30 HOV', 886, 890, 'road tilt'], ['Texas 360 Toll', 604, 1748, 'road up']
];
places.forEach(p => pin(p[1], p[2], 'place ' + (p[3] || ''), p[0]));
const drop = (fill, glyph) => `<svg class="marker" viewBox="0 0 18 26"><path d="M9 0a9 9 0 0 0-9 9c0 6 7 9 9 17 2-8 9-11 9-17a9 9 0 0 0-9-9z" fill="${fill}"/>${glyph}</svg>`;
pin(698, 118, '', drop('#12b5f5', '<path d="M9 3.500c.7 0 .9.700.9 2v1.700l4.600 3v1.300l-4.600-1.500v2.800l1.300 1.200v.8L9 14.200l-2.200.6V14l1.300-1.200V10l-4.600 1.500v-1.300l4.600-3V5.500c0-1.300.2-2 .9-2z" fill="#fff"/>'));
pin(1285, 697, '', drop('#8d97a3', '<path d="M4.500 7.500L9 4.500l4.500 3zM5.500 8.500V12M9 8.500V12M12.500 8.500V12M4.500 13h9" stroke="#fff" fill="none"/>'));
pin(1502, 508, '', drop('#35a853', ''));

const dots = {
  '': '659,676 650,763 712,745 704,751 694,774 703,775 717,797 708,808 650,845 693,851 713,845 717,839 761,877 763,887 735,900 728,909 729,917 757,916 755,937 792,908 822,912 823,922 710,937 784,955 773,1030 804,1073 861,1093 860,1104 671,1040 682,1049 838,1138 836,1144 801,1160 811,1174 808,1187 774,1198 817,1204 826,1226 645,1240 708,1228 712,1250 671,1265 657,1267 696,1270 697,1280 700,1286 706,1279 694,1289 708,1291 721,1279 723,1267 721,1291 731,1289 687,1306 708,1306 790,1258 816,1313 832,1310 652,1342 649,1349 663,1348 672,1343 658,1356 701,1378 800,1370 802,1388 659,1402 661,1417 696,1444 657,1460 657,1484 748,1504 650,1594 657,1705 665,1723 662,1795 662,1805 676,1803 677,1820 664,1832 677,1790',
  b: '655,671 661,688 699,779 706,785 701,792 698,800 706,796 680,832 742,868 753,868 747,877 749,888 780,865 758,914 755,925 759,932 758,962 761,966 787,991 670,1048 788,1095 781,1105 779,1112 814,1141 828,1208 753,1196 754,1205 698,1222 701,1243 725,1250 701,1255 657,1258 703,1277 793,1279 774,1276 771,1285 761,1309 763,1319 762,1327 726,1298 728,1306 725,1312 768,1360 750,1381 745,1400 809,1376 659,1370 660,1377 666,1396 712,1429 716,1444 774,1441 716,1462 742,1481 739,1490 715,1487 703,1498 707,1504 667,1492 664,1508 652,1511 649,1517 667,1513 674,1522 683,1714 701,1756 700,1762 674,1762 678,1771 691,1783 675,1795 672,1802 693,1817',
  g: '719,1490 706,1497'
};
for (const kind in dots) dots[kind].split(' ').forEach(p => { const [x, y] = p.split(','); pin(+x, +y, 'dot ' + kind); });
```
